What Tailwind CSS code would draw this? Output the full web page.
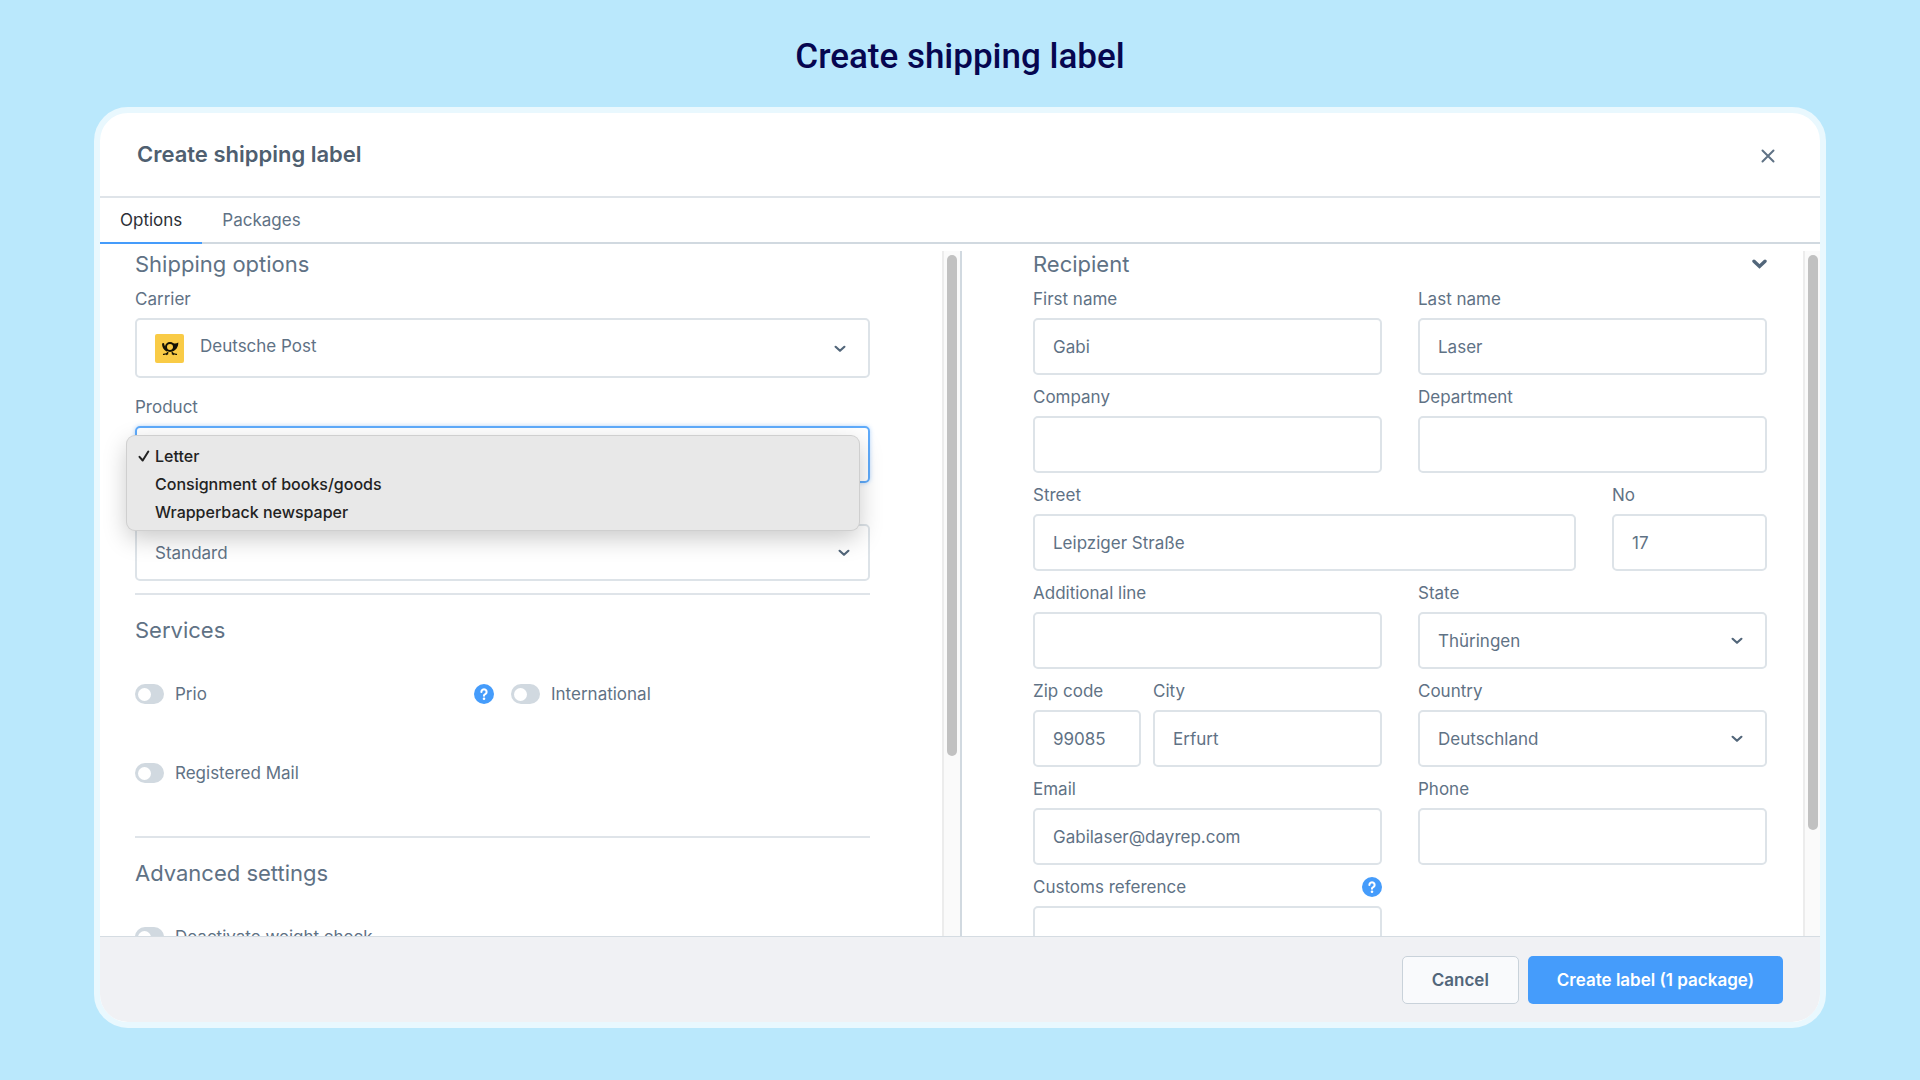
<!DOCTYPE html>
<html lang="en">
<head>
<meta charset="utf-8">
<meta name="viewport" content="width=device-width, initial-scale=1">
<title>Create shipping label</title>
<script src="https://cdn.jsdelivr.net/npm/@tailwindcss/browser@4"></script>
</head>
<body class="flex h-screen min-h-[700px] flex-col bg-[#bae8fc] px-[94px] pb-[52px] font-['Inter',sans-serif] text-[17px] leading-6 text-[#5f7285]">

<svg class="hidden" aria-hidden="true">
  <symbol id="chevron" viewBox="0 0 12 8"><path d="M1.600 1.800 6 5.800l4.400-4" fill="none" stroke="#52667a" stroke-width="2.200" stroke-linecap="round" stroke-linejoin="round"/></symbol>
  <symbol id="help" viewBox="0 0 20 20"><circle cx="10" cy="10" r="10" fill="#459cfb"/><path d="M7.400 7.900a2.600 2.600 0 1 1 3.900 2.300c-.9.500-1.300.8-1.300 1.500" fill="none" stroke="#fff" stroke-width="2.100" stroke-linecap="round"/><circle cx="10" cy="14.700" r="1.300" fill="#fff"/></symbol>
</svg>

<header class="flex h-[107px] shrink-0 items-center justify-center pt-1.5">
  <h1 class="font-['Roboto',sans-serif] text-[35px] leading-10 font-medium text-[#060650]">Create shipping label</h1>
</header>

<main class="flex min-h-0 flex-1 flex-col overflow-hidden rounded-[34px] border-6 border-[#e9f8fe] bg-white">
  <div class="flex h-[85px] shrink-0 items-center justify-between border-b-2 border-[#dfe4e9] pr-[45px] pb-0.5 pl-[37px]">
    <h2 class="text-[22px] font-semibold text-[#4f5f70]">Create shipping label</h2>
    <button type="button" aria-label="Close" class="pt-1"><svg class="size-[14px]" viewBox="0 0 14 14"><path d="m1.500 1.500 11 11m0-11-11 11" stroke="#5f7285" stroke-width="2" stroke-linecap="round"/></svg></button>
  </div>

  <nav class="flex h-[46px] shrink-0 border-b-2 border-[#d1d9e0]">
    <a href="#options" class="-mb-0.5 flex items-center border-b-2 border-[#459cfb] px-5 text-[#2b2f36]">Options</a>
    <a href="#packages" class="-mb-0.5 flex items-center border-b-2 border-transparent px-5">Packages</a>
  </nav>

  <div class="flex min-h-0 flex-1 pt-[7px]">
    <section id="options" class="flex w-1/2 overflow-hidden">
      <div class="min-w-0 flex-1 pr-[72px] pl-[35px]">
        <h3 class="text-[22px] leading-[26px]">Shipping options</h3>
        <label for="carrier" class="flex h-[41px] items-center pt-[3px]">Carrier</label>
        <div class="relative">
          <select id="carrier" class="block h-[60px] w-full appearance-none rounded-[5px] border-2 border-[#dde3e8] pb-1 pl-[63px] outline-none"><option>Deutsche Post</option></select>
          <svg class="pointer-events-none absolute top-4 left-5 size-[29px]" viewBox="0 0 29 29">
            <rect width="29" height="29" rx="2" fill="#f9cb46"/>
            <circle cx="15" cy="13" r="4" fill="none" stroke="#141205" stroke-width="2"/>
            <path d="M7 9.500 9 9c.3 2.800 1.500 5 4 7.500l-1.500 1C8.500 16 7 13 7 9.500ZM17.500 8.900c2 .9 3.800.8 5.800-.4.100 4.500-2.300 8.200-6.800 9.100l-.8-1.300c2.600-1 3.800-3.800 1.800-7.400Z" fill="#141205"/>
            <path d="M8 20.300c2.400.2 4.200-.5 5.200-2.300m8.800 2.300c-2.400.2-4.200-.5-5.200-2.300M11.200 20.800l2-1.200m5.600 1.200-2-1.200" fill="none" stroke="#141205" stroke-width="1.200"/>
          </svg>
          <svg class="pointer-events-none absolute top-[27px] right-6 h-2 w-3"><use href="#chevron"/></svg>
        </div>

        <label for="product" class="mt-[7px] flex h-[41px] items-center pt-0.5">Product</label>
        <div class="relative z-10">
          <select id="product" class="block h-[57px] w-full appearance-none rounded-[5px] border-2 border-[#5fabfb] pl-[18px] text-transparent shadow-[0_0_4px_#459cfb66] outline-none"><option>Letter</option><option>Consignment of books/goods</option><option>Wrapperback newspaper</option></select>
          <ul role="listbox" aria-label="Product" class="absolute top-[10px] right-[11px] -left-2 rounded-lg bg-[#e8e8e8] pt-1.5 pb-1 text-base leading-7 font-medium text-[#222222] shadow-[0_0_0_1px_#cfcfcf,0_8px_24px_#00000038]">
            <li role="option" aria-selected="true" class="flex items-center pl-[11px]"><svg class="mr-[5px] size-3" viewBox="0 0 12 12"><path d="m1.500 6.800 3.200 3.700L10.300 1.500" fill="none" stroke="#222" stroke-width="2" stroke-linecap="round" stroke-linejoin="round"/></svg>Letter</li>
            <li role="option" aria-selected="false" class="pl-7">Consignment of books/goods</li>
            <li role="option" aria-selected="false" class="pl-7">Wrapperback newspaper</li>
          </ul>
        </div>

        <div class="relative mt-[41px]">
          <select aria-label="Type" class="block h-[57px] w-full appearance-none rounded-[5px] border-2 border-[#dde3e8] pl-[18px] outline-none"><option>Standard</option></select>
          <svg class="pointer-events-none absolute top-[25px] right-5 h-2 w-3"><use href="#chevron"/></svg>
        </div>

        <hr class="mt-3 border-t-2 border-[#dfe4e9]">
        <h3 class="mt-[22px] text-[22px] leading-[26px]">Services</h3>
        <div class="mt-[41px] grid grid-cols-2 gap-x-[17px] gap-y-[59px] leading-5">
          <div class="flex items-center">
            <label class="flex flex-1 items-center gap-[11px]"><input type="checkbox" class="flex h-5 w-[29px] appearance-none items-center rounded-full bg-[#d1d9e0] px-[3px] before:size-[13px] before:rounded-full before:bg-white checked:justify-end checked:bg-[#459cfb]">Prio</label>
            <button type="button" aria-label="Help for Prio"><svg class="size-5"><use href="#help"/></svg></button>
          </div>
          <label class="flex items-center gap-[11px]"><input type="checkbox" class="flex h-5 w-[29px] appearance-none items-center rounded-full bg-[#d1d9e0] px-[3px] before:size-[13px] before:rounded-full before:bg-white checked:justify-end checked:bg-[#459cfb]">International</label>
          <label class="flex items-center gap-[11px]"><input type="checkbox" class="flex h-5 w-[29px] appearance-none items-center rounded-full bg-[#d1d9e0] px-[3px] before:size-[13px] before:rounded-full before:bg-white checked:justify-end checked:bg-[#459cfb]">Registered Mail</label>
        </div>

        <hr class="mt-[53px] border-t-2 border-[#dfe4e9]">
        <h3 class="mt-[22px] text-[22px] leading-[26px]">Advanced settings</h3>
        <label class="mt-[41px] flex items-center gap-[11px] leading-5"><input type="checkbox" class="flex h-5 w-[29px] appearance-none items-center rounded-full bg-[#d1d9e0] px-[3px] before:size-[13px] before:rounded-full before:bg-white checked:justify-end checked:bg-[#459cfb]">Deactivate weight check</label>
      </div>
      <div class="w-[18px] shrink-0 border-l-2 border-[#ececec] bg-[#fafafa] py-1 pl-[3px]"><div class="h-[74%] w-[10px] rounded-full bg-[#c1c1c1]"></div></div>
    </section>

    <section class="flex w-1/2 overflow-hidden border-l-2 border-[#d1d9e0]">
      <div class="min-w-0 flex-1 pr-9 pl-[71px]">
        <div class="flex items-center justify-between">
          <h3 class="text-[22px] leading-[26px]">Recipient</h3>
          <button type="button" aria-label="Collapse recipient"><svg class="h-[10px] w-[15px]" viewBox="0 0 15 10"><path d="m2 2.200 5.500 5.300L13 2.200" fill="none" stroke="#52667a" stroke-width="3.400" stroke-linecap="round"/></svg></button>
        </div>
        <form class="grid grid-cols-2 gap-x-9">
          <div>
            <label for="first" class="flex h-[41px] items-center pt-[3px]">First name</label>
            <input id="first" value="Gabi" class="block h-[57px] w-full rounded-[5px] border-2 border-[#dde3e8] px-[18px] outline-none">
          </div>
          <div>
            <label for="last" class="flex h-[41px] items-center pt-[3px]">Last name</label>
            <input id="last" value="Laser" class="block h-[57px] w-full rounded-[5px] border-2 border-[#dde3e8] px-[18px] outline-none">
          </div>
          <div>
            <label for="company" class="flex h-[41px] items-center pt-[3px]">Company</label>
            <input id="company" class="block h-[57px] w-full rounded-[5px] border-2 border-[#dde3e8] px-[18px] outline-none">
          </div>
          <div>
            <label for="department" class="flex h-[41px] items-center pt-[3px]">Department</label>
            <input id="department" class="block h-[57px] w-full rounded-[5px] border-2 border-[#dde3e8] px-[18px] outline-none">
          </div>
          <div class="col-span-2 flex gap-9">
            <div class="flex-1">
              <label for="street" class="flex h-[41px] items-center pt-[3px]">Street</label>
              <input id="street" value="Leipziger Straße" class="block h-[57px] w-full rounded-[5px] border-2 border-[#dde3e8] px-[18px] outline-none">
            </div>
            <div class="w-[155px]">
              <label for="no" class="flex h-[41px] items-center pt-[3px]">No</label>
              <input id="no" value="17" class="block h-[57px] w-full rounded-[5px] border-2 border-[#dde3e8] px-[18px] outline-none">
            </div>
          </div>
          <div>
            <label for="additional" class="flex h-[41px] items-center pt-[3px]">Additional line</label>
            <input id="additional" class="block h-[57px] w-full rounded-[5px] border-2 border-[#dde3e8] px-[18px] outline-none">
          </div>
          <div>
            <label for="state" class="flex h-[41px] items-center pt-[3px]">State</label>
            <div class="relative">
              <select id="state" class="block h-[57px] w-full appearance-none rounded-[5px] border-2 border-[#dde3e8] pl-[18px] outline-none"><option>Thüringen</option></select>
              <svg class="pointer-events-none absolute top-[25px] right-6 h-2 w-3"><use href="#chevron"/></svg>
            </div>
          </div>
          <div class="flex gap-3">
            <div class="w-[108px]">
              <label for="zip" class="flex h-[41px] items-center pt-[3px]">Zip code</label>
              <input id="zip" value="99085" class="block h-[57px] w-full rounded-[5px] border-2 border-[#dde3e8] px-[18px] outline-none">
            </div>
            <div class="min-w-0 flex-1">
              <label for="city" class="flex h-[41px] items-center pt-[3px]">City</label>
              <input id="city" value="Erfurt" class="block h-[57px] w-full rounded-[5px] border-2 border-[#dde3e8] px-[18px] outline-none">
            </div>
          </div>
          <div>
            <label for="country" class="flex h-[41px] items-center pt-[3px]">Country</label>
            <div class="relative">
              <select id="country" class="block h-[57px] w-full appearance-none rounded-[5px] border-2 border-[#dde3e8] pl-[18px] outline-none"><option>Deutschland</option></select>
              <svg class="pointer-events-none absolute top-[25px] right-6 h-2 w-3"><use href="#chevron"/></svg>
            </div>
          </div>
          <div>
            <label for="email" class="flex h-[41px] items-center pt-[3px]">Email</label>
            <input id="email" type="email" value="Gabilaser@dayrep.com" class="block h-[57px] w-full rounded-[5px] border-2 border-[#dde3e8] px-[18px] outline-none">
          </div>
          <div>
            <label for="phone" class="flex h-[41px] items-center pt-[3px]">Phone</label>
            <input id="phone" type="tel" class="block h-[57px] w-full rounded-[5px] border-2 border-[#dde3e8] px-[18px] outline-none">
          </div>
          <div>
            <div class="flex h-[41px] items-center justify-between pt-[3px]">
              <label for="customs">Customs reference</label>
              <button type="button" aria-label="Help for customs reference"><svg class="size-5"><use href="#help"/></svg></button>
            </div>
            <input id="customs" class="block h-[57px] w-full rounded-[5px] border-2 border-[#dde3e8] px-[18px] outline-none">
          </div>
        </form>
      </div>
      <div class="w-[17px] shrink-0 border-l-2 border-[#ececec] bg-[#fafafa] py-1 pl-[3px]"><div class="h-[85%] w-[10px] rounded-full bg-[#c1c1c1]"></div></div>
    </section>
  </div>

  <footer class="flex h-[86px] shrink-0 items-center justify-end gap-[9px] border-t border-[#d5dce2] bg-[#f0f1f4] pr-[37px] font-semibold">
    <button type="button" class="h-12 rounded-[5px] border border-[#c9d2da] bg-[#f9fafc] px-[29px] text-[#52667a]">Cancel</button>
    <button type="button" class="h-12 rounded-[5px] bg-[#459cfb] px-[29px] text-white">Create label (1 package)</button>
  </footer>
</main>
</body>
</html>
